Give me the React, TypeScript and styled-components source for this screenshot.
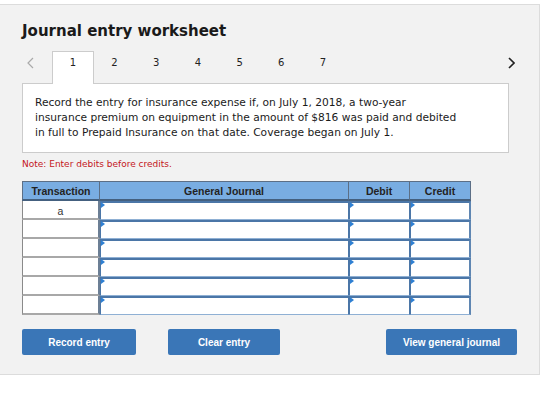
import styled, { createGlobalStyle } from "styled-components";

const GlobalStyle = createGlobalStyle`
  body {
    margin: 0;
    background: #ffffff;
    font-family: "DejaVu Sans", Verdana, sans-serif;
  }
`;

const tabs = [1, 2, 3, 4, 5, 6, 7];
const rows = ["a", "", "", "", "", ""];

const Chevron = ({ dir }: { dir: "left" | "right" }) => (
  <svg width="7" height="12" viewBox="0 0 7 12">
    <polyline
      points={dir === "left" ? "6,1 1,6 6,11" : "1,1 6,6 1,11"}
      fill="none"
      stroke={dir === "left" ? "#aaaaaa" : "#222222"}
      strokeWidth={dir === "left" ? 1.2 : 1.6}
    />
  </svg>
);

const App = () => {
  return (
    <>
      <GlobalStyle />
      <StPanel>
        <StTitle>Journal entry worksheet</StTitle>
        <StTabBar>
          <StArrow>
            <Chevron dir="left" />
          </StArrow>
          {tabs.map((t) => (
            <StTab key={t} $active={t === 1}>
              {t}
            </StTab>
          ))}
          <StSpacer />
          <StArrow $right>
            <Chevron dir="right" />
          </StArrow>
        </StTabBar>
        <StQuestion>
          Record the entry for insurance expense if, on July 1, 2018, a two-year
          <br />
          insurance premium on equipment in the amount of $816 was paid and debited
          <br />
          in full to Prepaid Insurance on that date. Coverage began on July 1.
        </StQuestion>
        <StNote>Note: Enter debits before credits.</StNote>

        <StGrid>
          <StHead>Transaction</StHead>
          <StHead>General Journal</StHead>
          <StHead>Debit</StHead>
          <StHead>Credit</StHead>
          {rows.map((r, i) => (
            <StRow key={i}>
              <StTxCell>{r}</StTxCell>
              <StInput />
              <StInput />
              <StInput $last />
            </StRow>
          ))}
        </StGrid>

        <StButtons>
          <StBtn $w={114}>Record entry</StBtn>
          <StBtn $w={112}>Clear entry</StBtn>
          <StSpacer />
          <StBtn $w={131}>View general journal</StBtn>
        </StButtons>
      </StPanel>
    </>
  );
};

const StPanel = styled.div`
  width: 540px;
  height: 371px;
  margin-top: 4px;
  background: #f2f2f2;
  border: 1px solid #dcdcdc;
  border-left: none;
  padding: 0 0 0 22px;
  box-sizing: border-box;
`;

const StTitle = styled.h1`
  margin: 0;
  padding-top: 17px;
  font-size: 15px;
  line-height: 18px;
  font-weight: bold;
  color: #1a1a1a;
  font-family: "DejaVu Sans", Verdana, sans-serif;
`;

const StTabBar = styled.div`
  display: flex;
  align-items: stretch;
  width: 493px;
  height: 32px;
  margin-top: 11px;
  position: relative;
  z-index: 1;
`;

const StArrow = styled.div<{ $right?: boolean }>`
  width: 30px;
  display: flex;
  align-items: flex-start;
  justify-content: ${(p) => (p.$right ? "flex-end" : "flex-start")};
  padding-left: ${(p) => (p.$right ? "0" : "5px")};
  padding-top: 6px;
  box-sizing: border-box;
`;

const StTab = styled.div<{ $active?: boolean }>`
  width: 41.7px;
  box-sizing: border-box;
  display: flex;
  align-items: flex-start;
  justify-content: center;
  padding-top: 5px;
  font-size: 10px;
  line-height: 12px;
  color: #222;
  background: ${(p) => (p.$active ? "#fff" : "transparent")};
  border: 1px solid ${(p) => (p.$active ? "#cccccc" : "transparent")};
  border-bottom: none;
  margin-bottom: ${(p) => (p.$active ? "-1px" : "0")};
`;

const StSpacer = styled.div`
  flex: 1;
`;

const StQuestion = styled.div`
  width: 487px;
  box-sizing: border-box;
  background: #fff;
  border: 1px solid #cccccc;
  padding: 11px 12px 12px;
  font-size: 10.65px;
  line-height: 15px;
  color: #1a1a1a;
  white-space: nowrap;
`;

const StNote = styled.div`
  margin-top: 5px;
  font-size: 9px;
  line-height: 12px;
  color: #c4161c;
`;

const StGrid = styled.div`
  display: grid;
  grid-template-columns: 78px 249px 61px 61px;
  width: 449px;
  margin-top: 11px;
  font-family: "Liberation Sans", Arial, sans-serif;
`;

const StHead = styled.div`
  height: 20px;
  box-sizing: border-box;
  background: #79ade2;
  border: 1px solid #5c6f86;
  border-bottom: 2px solid #44607f;
  margin-left: -1px;
  display: flex;
  align-items: center;
  justify-content: center;
  font-size: 10.5px;
  font-weight: bold;
  color: #232323;
  &:first-child {
    margin-left: 0;
  }
`;

const StRow = styled.div`
  display: contents;
`;

const StTxCell = styled.div`
  height: 19px;
  box-sizing: border-box;
  background: #fff;
  border-left: 1px solid #8a8a8a;
  border-bottom: 2px solid #a8a8a8;
  border-right: 2px solid #6c7f95;
  display: flex;
  align-items: center;
  justify-content: center;
  padding-top: 2px;
  font-size: 10.5px;
  color: #333;
`;

const StInput = styled.div<{ $last?: boolean }>`
  height: 19px;
  box-sizing: border-box;
  background: #fff;
  border-top: 2px solid #4b76a7;
  border-left: 1px solid #4b76a7;
  border-bottom: 1px solid #8fb0d4;
  border-right: ${(p) => (p.$last ? "2px solid #5f86b2" : "1px solid #4b76a7")};
  position: relative;
  &::before {
    content: "";
    position: absolute;
    left: 0;
    top: -1px;
    border-left: 4px solid #2f80d3;
    border-top: 3px solid transparent;
    border-bottom: 3px solid transparent;
  }
`;

const StButtons = styled.div`
  display: flex;
  gap: 32px;
  width: 495px;
  margin-top: 14px;
`;

const StBtn = styled.button<{ $w: number }>`
  width: ${(p) => p.$w}px;
  height: 26px;
  border: none;
  border-radius: 2px;
  background: #3a76b7;
  color: #fff;
  font-family: "Liberation Sans", Arial, sans-serif;
  font-weight: bold;
  font-size: 10px;
  padding: 0;
  cursor: pointer;
`;

export default App;
